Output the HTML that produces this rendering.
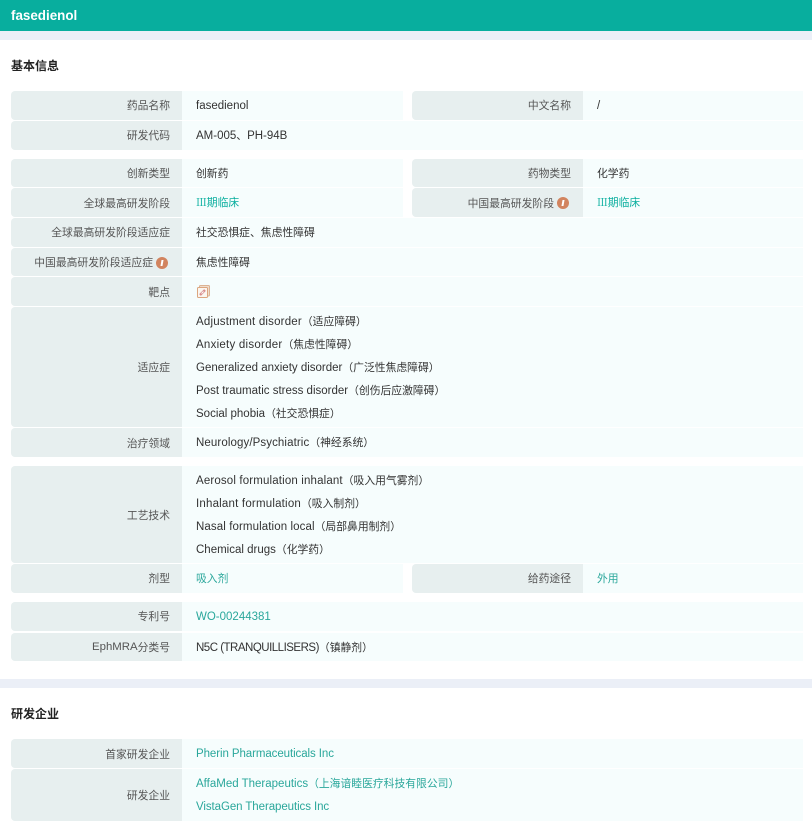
<!DOCTYPE html>
<html lang="zh-CN">
<head>
<meta charset="utf-8">
<title>fasedienol</title>
<style>
html,body{margin:0;padding:0;background:#fff}
body{width:812px;height:828px;overflow:hidden;position:relative;font-family:"Liberation Sans","Noto Sans CJK SC",sans-serif;font-size:11.5px;color:#333}
.hd{position:absolute;left:0;top:0;width:812px;height:31px;background:#08ae9e;color:#fff;font-weight:bold;font-size:13.4px;line-height:31px;text-indent:11px}
.bar{position:absolute;left:0;width:812px;background:#ebeff7}
.t{position:absolute;left:11px;font-weight:bold;font-size:12px;line-height:18px;color:#222}
.l{position:absolute;background:#e7efef;border-radius:4px 0 0 4px;color:#555;font-size:10.8px;text-align:right;box-sizing:border-box;padding-right:12px;white-space:nowrap;display:flex;align-items:center;justify-content:flex-end}
.u{padding-bottom:2px}
.ic{padding-right:14px}
.v{position:absolute;background:#f6fdfd;box-sizing:border-box;padding-left:14px;white-space:nowrap;color:#333;display:flex;flex-direction:column;justify-content:center}
.v div{height:23px;line-height:23px;position:relative;top:1px}
.v.g div{top:0}
.v i{font-style:normal;font-size:10.8px;letter-spacing:0}
.g{color:#08ae9e}
.g2{color:#2aa79b}
.r{font-family:"Noto Serif CJK SC","Noto Sans CJK SC",serif}
.info{display:inline-block;width:12px;height:12px;border-radius:50%;background:#d2845f;margin-left:3px;position:relative;flex:none;top:0.5px}
.info:after{content:"";position:absolute;left:5.3px;top:3px;width:1.6px;height:6px;background:#fff;transform:skewX(-10deg)}
</style>
</head>
<body>
<div class="hd">fasedienol</div>
<div class="bar" style="top:31px;height:9px"></div>
<div class="t" style="top:57px">基本信息</div>

<div class="l u" style="left:11px;top:91px;width:171px;height:29px">药品名称</div>
<div class="v" style="left:182px;top:91px;width:221px;height:29px"><div>fasedienol</div></div>
<div class="l u" style="left:412px;top:91px;width:171px;height:29px">中文名称</div>
<div class="v" style="left:583px;top:91px;width:220px;height:29px"><div>/</div></div>

<div class="l u" style="left:11px;top:121px;width:171px;height:29px">研发代码</div>
<div class="v" style="left:182px;top:121px;width:621px;height:29px"><div>AM-005<i>、</i>PH-94B</div></div>

<div class="l" style="left:11px;top:159px;width:171px;height:28px">创新类型</div>
<div class="v" style="left:182px;top:159px;width:221px;height:28px"><div><i>创新药</i></div></div>
<div class="l" style="left:412px;top:159px;width:171px;height:28px">药物类型</div>
<div class="v" style="left:583px;top:159px;width:220px;height:28px"><div><i>化学药</i></div></div>

<div class="l" style="left:11px;top:188px;width:171px;height:29px">全球最高研发阶段</div>
<div class="v g" style="left:182px;top:188px;width:221px;height:29px"><div><i><span class="r">Ⅲ</span>期临床</i></div></div>
<div class="l ic" style="left:412px;top:188px;width:171px;height:29px">中国最高研发阶段<span class="info"></span></div>
<div class="v g" style="left:583px;top:188px;width:220px;height:29px"><div><i><span class="r">Ⅲ</span>期临床</i></div></div>

<div class="l u" style="left:11px;top:218px;width:171px;height:29px">全球最高研发阶段适应症</div>
<div class="v" style="left:182px;top:218px;width:621px;height:29px"><div><i>社交恐惧症、焦虑性障碍</i></div></div>

<div class="l ic" style="left:11px;top:248px;width:171px;height:28px">中国最高研发阶段适应症<span class="info"></span></div>
<div class="v" style="left:182px;top:248px;width:621px;height:28px"><div><i>焦虑性障碍</i></div></div>

<div class="l" style="left:11px;top:277px;width:171px;height:29px">靶点</div>
<div class="v" style="left:182px;top:277px;width:621px;height:29px">
<svg width="13" height="13" viewBox="0 0 13 13" style="position:absolute;left:15px;top:8px"><rect x="2.5" y="0.5" width="10" height="10.5" rx="1" fill="#efdccb" stroke="#dcb394"/><rect x="0.5" y="2.5" width="10" height="10" rx="1" fill="#fbf6f0" stroke="#dca67f"/><path d="M3 10L8 5" stroke="#d98e8e" stroke-width="2.4"/><path d="M4.5 8.5L6.5 6.5" stroke="#fff" stroke-width="0.9"/></svg>
</div>

<div class="l" style="left:11px;top:307px;width:171px;height:120px">适应症</div>
<div class="v" style="left:182px;top:307px;width:621px;height:120px">
<div style="letter-spacing:.19px">Adjustment disorder<i>（适应障碍）</i></div>
<div style="letter-spacing:.25px">Anxiety disorder<i>（焦虑性障碍）</i></div>
<div>Generalized anxiety disorder<i>（广泛性焦虑障碍）</i></div>
<div>Post traumatic stress disorder<i>（创伤后应激障碍）</i></div>
<div>Social phobia<i>（社交恐惧症）</i></div>
</div>

<div class="l" style="left:11px;top:428px;width:171px;height:29px">治疗领域</div>
<div class="v" style="left:182px;top:428px;width:621px;height:29px"><div style="letter-spacing:.1px">Neurology/Psychiatric<i>（神经系统）</i></div></div>

<div class="l" style="left:11px;top:466px;width:171px;height:97px">工艺技术</div>
<div class="v" style="left:182px;top:466px;width:621px;height:97px">
<div style="letter-spacing:.15px">Aerosol formulation inhalant<i>（吸入用气雾剂）</i></div>
<div style="letter-spacing:.2px">Inhalant formulation<i>（吸入制剂）</i></div>
<div style="letter-spacing:.1px">Nasal formulation local<i>（局部鼻用制剂）</i></div>
<div>Chemical drugs<i>（化学药）</i></div>
</div>

<div class="l u" style="left:11px;top:564px;width:171px;height:29px">剂型</div>
<div class="v g2" style="left:182px;top:564px;width:221px;height:29px"><div><i>吸入剂</i></div></div>
<div class="l u" style="left:412px;top:564px;width:171px;height:29px">给药途径</div>
<div class="v g2" style="left:583px;top:564px;width:220px;height:29px"><div><i>外用</i></div></div>

<div class="l u" style="left:11px;top:602px;width:171px;height:29px">专利号</div>
<div class="v g2" style="left:182px;top:602px;width:621px;height:29px"><div>WO-00244381</div></div>

<div class="l" style="left:11px;top:633px;width:171px;height:28px"><span style="font-size:11.4px">EphMRA</span>分类号</div>
<div class="v" style="left:182px;top:633px;width:621px;height:28px"><div style="letter-spacing:-.5px">N5C (TRANQUILLISERS)<i>（镇静剂）</i></div></div>

<div class="bar" style="top:679px;height:9px"></div>
<div class="t" style="top:705px">研发企业</div>

<div class="l" style="left:11px;top:739px;width:171px;height:29px">首家研发企业</div>
<div class="v g2" style="left:182px;top:739px;width:621px;height:29px"><div style="letter-spacing:-.08px">Pherin Pharmaceuticals Inc</div></div>

<div class="l" style="left:11px;top:769px;width:171px;height:52px">研发企业</div>
<div class="v g2" style="left:182px;top:769px;width:621px;height:52px">
<div>AffaMed Therapeutics<i>（上海谙睦医疗科技有限公司）</i></div>
<div style="letter-spacing:-.08px">VistaGen Therapeutics Inc</div>
</div>
</body>
</html>
